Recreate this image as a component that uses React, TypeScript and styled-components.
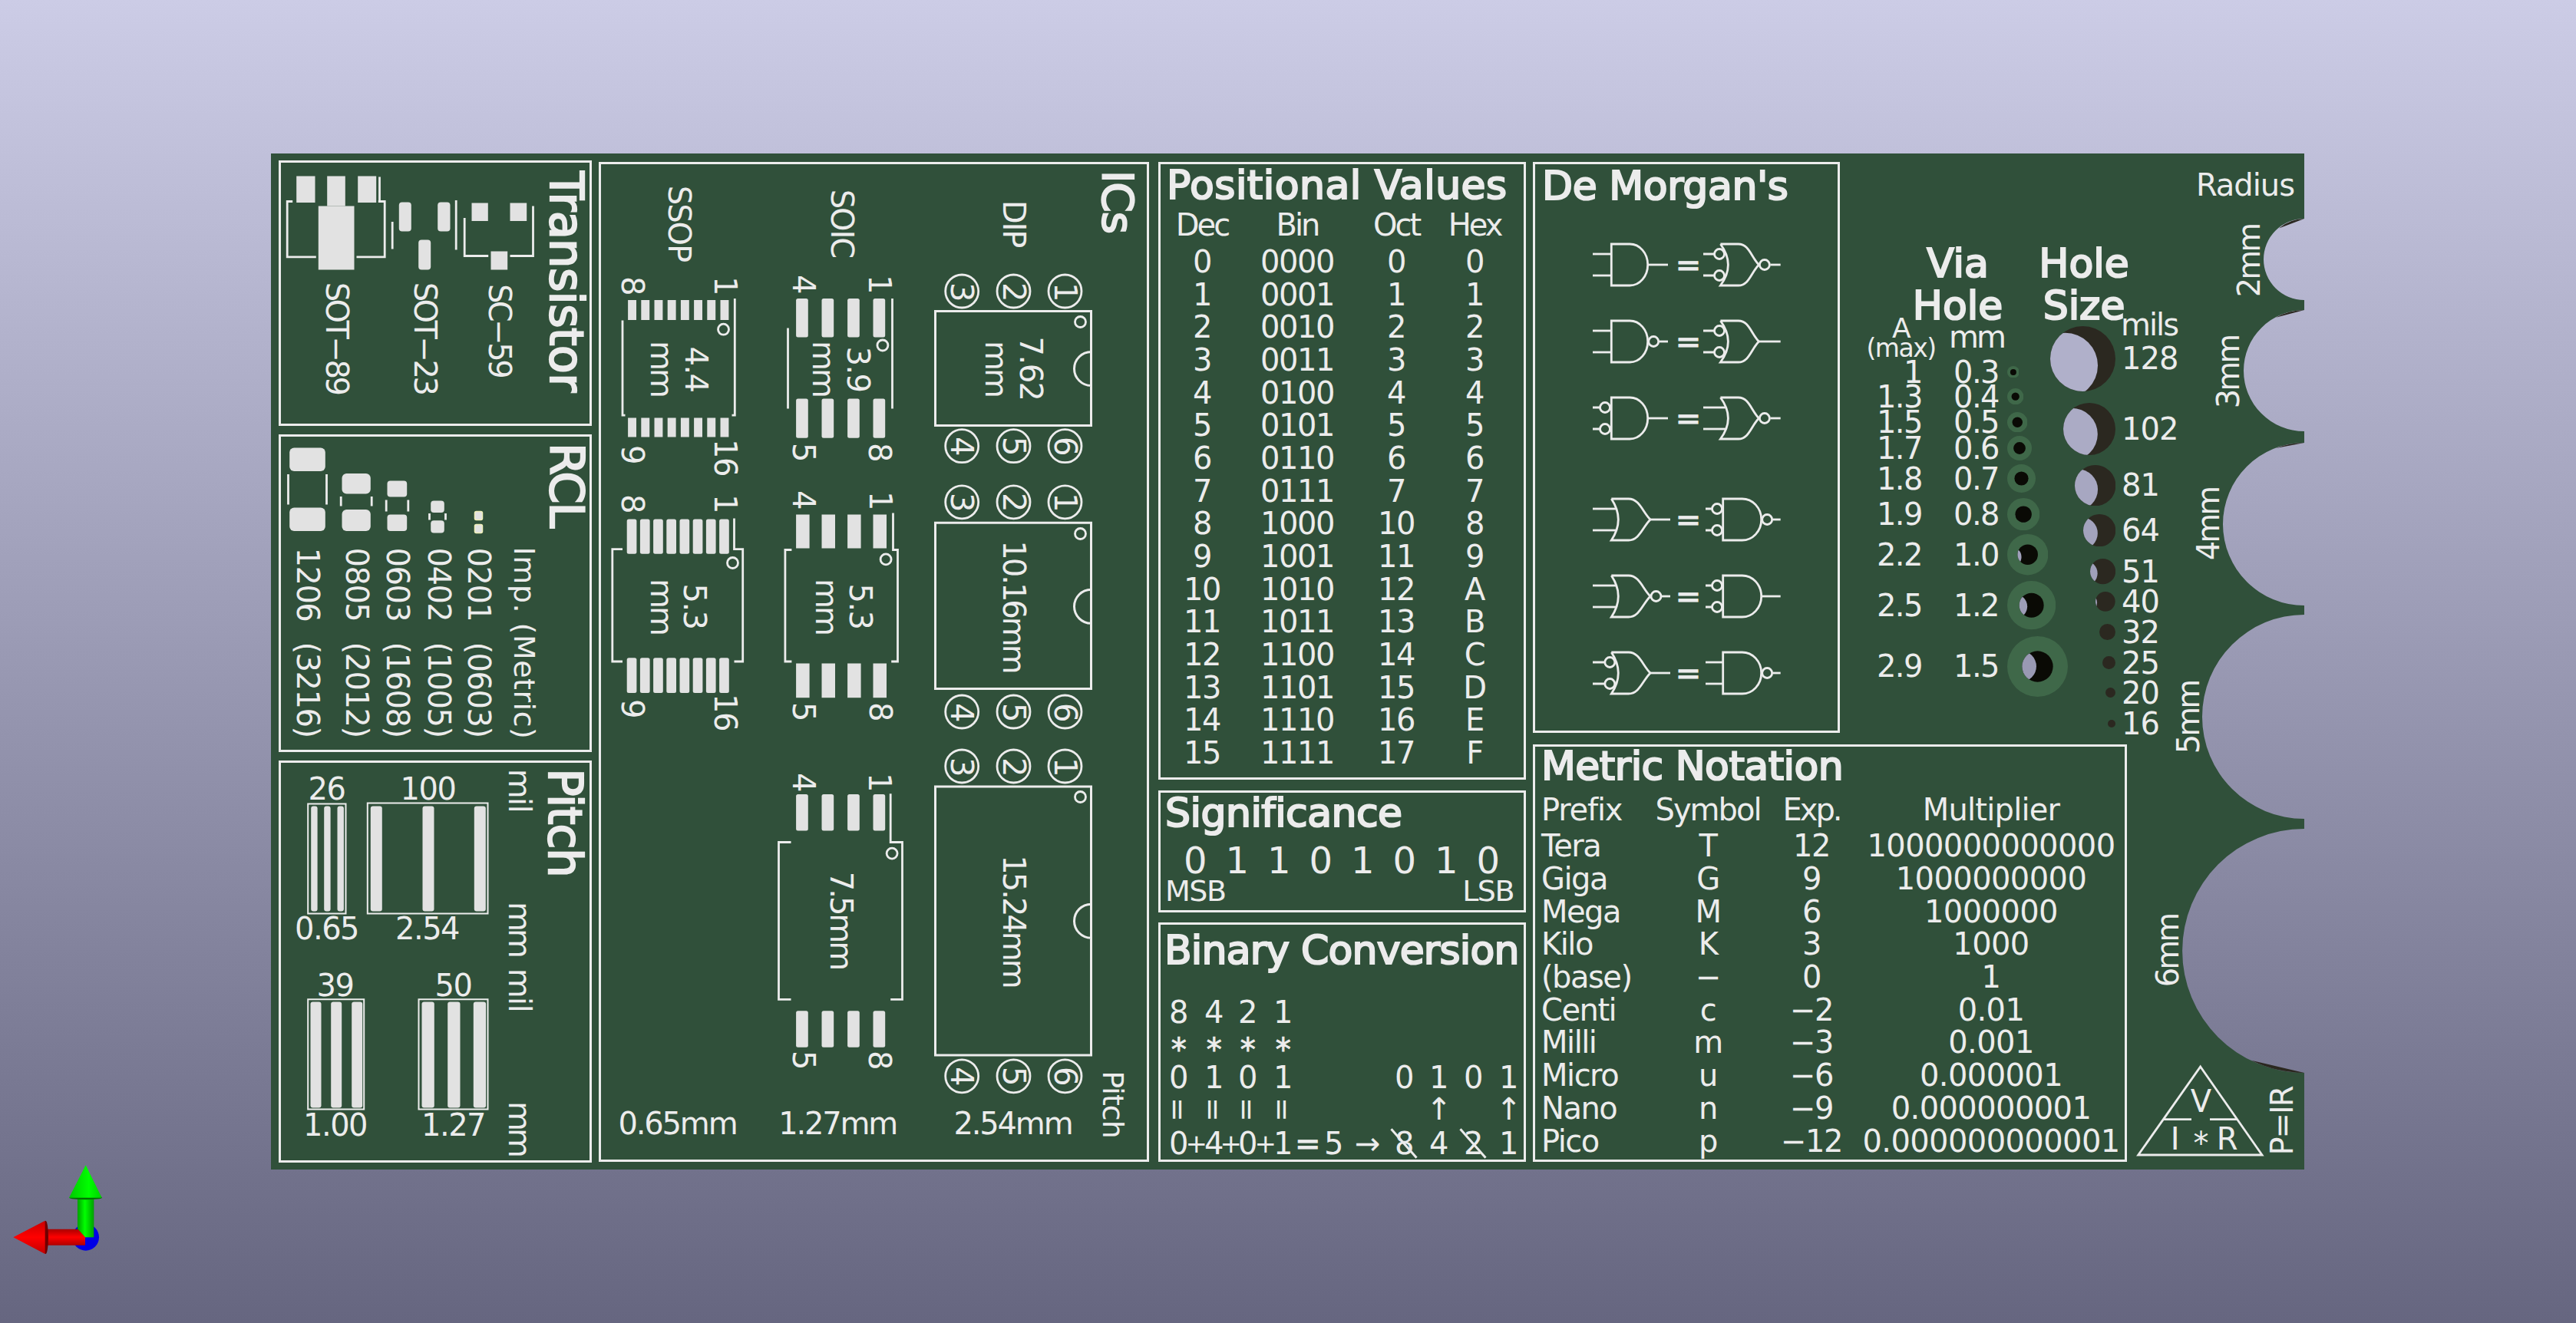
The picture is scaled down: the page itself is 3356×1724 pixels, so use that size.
import React from "react";
import styled, { createGlobalStyle } from "styled-components";

const SILK = "#ececec";
const PAD = "#e2e2e2";
const BOARD = "#30503a";
const FONT = `"DejaVu Sans", "Liberation Sans", sans-serif`;

const Global = createGlobalStyle`
  html, body { margin: 0; padding: 0; background: #666680; }
`;

const Page = styled.div`
  position: relative;
  box-sizing: border-box;
  width: 3356px;
  height: 1724px;
  overflow: hidden;
  padding: 200px 0 0 353px;
  background: linear-gradient(180deg, #ccccE6 0%, #666680 100%);
  font-family: ${FONT};
  color: ${SILK};
`;

const Board = styled.div`
  position: relative;
  box-sizing: border-box;
  display: flex;
  align-items: flex-start;
  width: 2649px;
  height: 1324px;
  padding: 9px 0 0 10px;
  background: ${BOARD};
  clip-path: path("M0 0 H2649 V85 A53 53 0 0 0 2649 191 V204 A79 79 0 0 0 2649 362 V377 A106 106 0 0 0 2649 589 V601 A133 133 0 0 0 2649 867 V880 A159 159 0 0 0 2649 1198 V1324 H0 Z");
`;

const LeftColumn = styled.div`
  display: flex;
  flex-direction: column;
  gap: 11px;
  flex: 0 0 409px;
`;

const MidColumn = styled.div`
  display: flex;
  flex-direction: column;
  flex: 0 0 479px;
  margin: 2px 0 0 12px;
`;

const RightColumn = styled.div`
  display: flex;
  flex-direction: column;
  gap: 15px;
  margin: 2px 0 0 9px;
`;

const UpperRow = styled.div`
  display: flex;
  align-items: flex-start;
  height: 744px;
`;

const Panel = styled.section<{ $w: number; $h: number; $mt?: number; $ml?: number }>`
  position: relative;
  box-sizing: border-box;
  flex: none;
  width: ${(p) => p.$w}px;
  height: ${(p) => p.$h}px;
  margin-top: ${(p) => p.$mt ?? 0}px;
  margin-left: ${(p) => p.$ml ?? 0}px;
  border: 3.5px solid ${SILK};
`;

const PanelTitle = styled.h2<{ $ls?: number; $l?: number; $mt?: number }>`
  margin: ${(p) => p.$mt ?? 0}px 0 0 ${(p) => p.$l ?? 9}px;
  font-size: 52px;
  font-weight: 400;
  line-height: 50px;
  height: 50px;
  white-space: pre;
  letter-spacing: ${(p) => p.$ls ?? 0}px;
  -webkit-text-stroke: 2.2px ${SILK};
`;

const Silk = styled.span<{
  $x: number;
  $y: number;
  $s?: number;
  $ls?: number;
  $ws?: number;
  $d?: "cw" | "ccw";
  $b?: boolean;
}>`
  position: absolute;
  left: ${(p) => p.$x}px;
  top: ${(p) => p.$y}px;
  font-size: ${(p) => p.$s ?? 40}px;
  letter-spacing: ${(p) => p.$ls ?? -1.5}px;
  word-spacing: ${(p) => p.$ws ?? 0}px;
  line-height: 1;
  white-space: pre;
  writing-mode: ${(p) => (p.$d ? "vertical-rl" : "horizontal-tb")};
  transform: translate(-50%, -50%) ${(p) => (p.$d === "ccw" ? "rotate(180deg)" : "")};
  ${(p) => (p.$b ? `-webkit-text-stroke: 2.2px ${SILK};` : "")}
`;

const ArtSvg = styled.svg<{ $l: number; $t: number }>`
  position: absolute;
  left: ${(p) => p.$l}px;
  top: ${(p) => p.$t}px;
  overflow: visible;
`;

const Pad = styled.rect<{ $rim?: boolean }>`
  fill: ${PAD};
  ${(p) => (p.$rim ? "stroke: #efefb8; stroke-width: 1.5px;" : "")}
`;

const Trace = styled.path<{ $sw?: number }>`
  fill: none;
  stroke: ${SILK};
  stroke-width: ${(p) => p.$sw ?? 2.8}px;
`;

const Ring = styled.circle<{ $sw?: number }>`
  fill: none;
  stroke: ${SILK};
  stroke-width: ${(p) => p.$sw ?? 2.8}px;
`;

const Art: React.FC<{ x: number; y: number; w: number; h: number; l?: number; t?: number; children: React.ReactNode }> = ({
  x, y, w, h, l = 0, t = 0, children,
}) => (
  <ArtSvg $l={l} $t={t} width={w} height={h} viewBox={`${x} ${y} ${w} ${h}`}>
    {children}
  </ArtSvg>
);

const at = (ox: number, oy: number) => (x: number, y: number) => ({ $x: x - ox, $y: y - oy });

/* ---------- Transistor ---------- */
const TransistorPanel = () => {
  const p = at(366.5, 212.5);
  return (
    <Panel $w={408} $h={346}>
      <Art x={366.5} y={212.5} w={401} h={339}>
        <Pad x={386.7} y={230} width={24.3} height={34.5} />
        <Pad x={426.7} y={230} width={23.6} height={39} />
        <Pad x={466.7} y={230} width={24} height={34.5} />
        <Pad x={415.3} y={269} width={46.7} height={83} />
        <Trace d="M381.7 263 H374.7 V335.4 H412.3 M465 335.4 H501.7 V263 H495 V231 M495 263 H493.3" />
        <Pad x={520.3} y={264} width={16} height={38} rx={4} />
        <Pad x={570.7} y={264} width={16.3} height={38} rx={4} />
        <Pad x={545.7} y={313} width={16} height={39} rx={4} />
        <Trace d="M511.7 289.5 V325 M594.7 261.4 V326" />
        <Pad x={615} y={265} width={21.3} height={23.5} />
        <Pad x={665} y={265} width={21.7} height={23.5} />
        <Pad x={640} y={328} width={21.7} height={24} />
        <Trace d="M605.7 284.4 V334 H636.7 M665 334 H695 V269" />
      </Art>
      <Silk {...p(738, 367)} $d="cw" $s={60} $ls={-0.4} $b>Transistor</Silk>
      <Silk {...p(439, 440)} $d="cw" $ls={-3.5}>SOT−89</Silk>
      <Silk {...p(554.5, 440)} $d="cw" $ls={-3.5}>SOT−23</Silk>
      <Silk {...p(651.5, 430)} $d="cw" $ls={-3.5}>SC−59</Silk>
    </Panel>
  );
};

/* ---------- RCL ---------- */
const rclSizes = [
  ["1206 (3216)", 401],
  ["0805 (2012)", 465.5],
  ["0603 (1608)", 518],
  ["0402 (1005)", 572],
  ["0201 (0603)", 624],
] as const;

const RclPanel = () => {
  const p = at(366.5, 569.5);
  return (
    <Panel $w={408} $h={414}>
      <Art x={366.5} y={569.5} w={401} h={407}>
        <Pad x={377.7} y={584} width={46.6} height={30.5} rx={6} />
        <Pad x={377.7} y={662} width={46.6} height={30.5} rx={6} />
        <Trace d="M376 618.6 V658 M426 618.6 V658" />
        <Pad x={446} y={617.5} width={37.3} height={26.5} rx={6} />
        <Pad x={446} y={664.5} width={37.3} height={28} rx={6} />
        <Trace d="M444.7 647.6 V660 M484.7 647.6 V660" />
        <Pad x={505} y={627} width={25.7} height={21} rx={4} />
        <Pad x={505} y={671} width={25.7} height={21.5} rx={4} />
        <Trace d="M503.7 652 V667 M532.3 652 V667" />
        <Pad x={561.7} y={653} width={17.6} height={15.6} rx={4} />
        <Pad x={561.7} y={678.8} width={17.6} height={16.2} rx={4} />
        <Trace d="M560 669.6 V678 M581 669.6 V678" />
        <Pad $rim x={619} y={667} width={10} height={11} rx={2} />
        <Pad $rim x={619} y={684} width={10} height={11} rx={2} />
      </Art>
      <Silk {...p(738, 632)} $d="cw" $s={60} $ls={-1.5} $b>RCL</Silk>
      <Silk {...p(683, 838)} $d="cw" $s={38} $ls={0.5}>Imp. (Metric)</Silk>
      {rclSizes.map(([t, x]) => (
        <Silk key={t} {...p(x, 837)} $d="cw" $ws={16}>{t}</Silk>
      ))}
    </Panel>
  );
};

/* ---------- Pitch ---------- */
const pitchLabels = [
  ["26", 426, 1028], ["100", 558, 1028], ["0.65", 426, 1210], ["2.54", 557, 1210],
  ["39", 437, 1284.5], ["50", 591, 1284.5], ["1.00", 437, 1466.5], ["1.27", 591, 1466.5],
] as const;

const PitchPanel = () => {
  const p = at(366.5, 994.5);
  const stripes = (xs: number[], w: number, y: number, h: number) =>
    xs.map((x) => <Pad key={x} x={x} y={y} width={w} height={h} rx={3} />);
  return (
    <Panel $w={408} $h={524}>
      <Art x={366.5} y={994.5} w={401} h={517}>
        <Trace $sw={2} d="M401.7 1048 H451 V1191 H401.7 Z" />
        {stripes([405.7, 422.7, 440], 8.4, 1051, 137)}
        <Trace $sw={2} d="M479.3 1047 H636 V1191 H479.3 Z" />
        {stripes([483.3, 551, 618.3], 15, 1051, 137)}
        <Trace $sw={2} d="M401.7 1302.7 H474.7 V1446 H401.7 Z" />
        {stripes([405, 431.7, 458.7], 14, 1306, 138)}
        <Trace $sw={2} d="M546 1302.7 H636 V1446 H546 Z" />
        {stripes([550, 583.7, 617.3], 16.3, 1306, 138)}
      </Art>
      <Silk {...p(736, 1072)} $d="cw" $s={60} $ls={-1} $b>Pitch</Silk>
      <Silk {...p(677, 1030)} $d="cw">mil</Silk>
      <Silk {...p(677, 1210)} $d="cw" $ls={-4}>mm</Silk>
      <Silk {...p(677, 1290)} $d="cw">mil</Silk>
      <Silk {...p(677, 1470)} $d="cw" $ls={-4}>mm</Silk>
      {pitchLabels.map(([t, x, y]) => (
        <Silk key={t} {...p(x, y)}>{t}</Silk>
      ))}
    </Panel>
  );
};

/* ---------- ICs ---------- */
const padRow = (x0: number, pitch: number, n: number, w: number, y: number, h: number, rx = 0) =>
  Array.from({ length: n }, (_, i) => (
    <Pad key={`${x0}-${y}-${i}`} x={x0 + i * pitch} y={y} width={w} height={h} rx={rx} />
  ));

const soicXs = [1037.6, 1071, 1104.6, 1138];
const soicPads = (w: number, y: number, h: number, rx: number) =>
  soicXs.map((x) => <Pad key={`${x}-${y}`} x={x} y={y} width={w} height={h} rx={rx} />);

const pinRows = [
  { y: 380, d: ["3", "2", "1"] },
  { y: 581.7, d: ["4", "5", "6"] },
  { y: 654.8, d: ["3", "2", "1"] },
  { y: 928, d: ["4", "5", "6"] },
  { y: 999, d: ["3", "2", "1"] },
  { y: 1402.8, d: ["4", "5", "6"] },
];
const pinXs = [1253.7, 1321, 1388];

const icLabels = [
  ["1", 945, 372], ["8", 824, 372.5], ["9", 824, 592], ["16", 945, 596],
  ["8", 824, 656], ["1", 945, 656], ["9", 824, 923], ["16", 945, 928],
  ["4", 1047, 370], ["1", 1146, 370], ["5", 1047, 589], ["8", 1146, 589],
  ["4", 1047, 651.6], ["1", 1147, 652], ["5", 1047, 927], ["8", 1147, 927],
  ["4", 1047, 1019.5], ["1", 1146, 1019.5], ["5", 1047, 1381.6], ["8", 1146, 1381.6],
  ["4.4", 907, 481], ["mm", 862, 480], ["5.3", 905.6, 790.3], ["mm", 862, 790],
  ["3.9", 1118, 481], ["mm", 1073, 480], ["5.3", 1121.4, 790], ["mm", 1077, 790],
  ["7.5mm", 1096, 1199.5], ["7.62", 1343.5, 480], ["mm", 1298, 480],
  ["10.16mm", 1321, 790], ["15.24mm", 1321, 1200],
] as const;

const IcsPanel = () => {
  const p = at(783.5, 214.5);
  return (
    <Panel $w={717} $h={1303} $ml={8} $mt={2}>
      <Art x={783.5} y={214.5} w={710} h={1296}>
        {pinRows.map((r) => pinXs.map((x) => <Ring key={`${x}-${r.y}`} cx={x} cy={r.y} r={21.5} />))}
        <Trace $sw={3} d="M1219 406 H1422 V555 H1219 Z M1422 459 A22 22 0 0 0 1422 503" />
        <Ring cx={1408} cy={420} r={7} />
        <Trace $sw={3} d="M1219 681.7 H1422 V898 H1219 Z M1422 768.8 A22 22 0 0 0 1422 812.8" />
        <Ring cx={1408} cy={696} r={7} />
        <Trace $sw={3} d="M1219 1025.6 H1422 V1375.5 H1219 Z M1422 1178.7 A22 22 0 0 0 1422 1222.7" />
        <Ring cx={1408} cy={1039} r={7} />

        {padRow(818.6, 17.2, 8, 10.9, 391.5, 26)}
        {padRow(818.6, 17.2, 8, 10.9, 545, 25)}
        <Trace d="M957.8 389.6 V541.6 H954 M811.5 418 V541.6 H815" />
        <Ring cx={943} cy={429.7} r={7} />

        {padRow(817.2, 17.2, 8, 12.7, 677, 45.3, 2.5)}
        {padRow(817.2, 17.2, 8, 12.7, 857.8, 45.7, 2.5)}
        <Trace d="M957 676 V716.2 H968.2 V862.5 H957 M811.5 716.2 H798.3 V862.5 H811.5" />
        <Ring cx={955} cy={734} r={7} />

        {soicPads(15.7, 389.6, 50.4, 2.5)}
        {soicPads(15.7, 520, 51.3, 2.5)}
        <Trace d="M1163 389.6 V533 M1027 428 V533" />
        <Ring cx={1150.4} cy={450.5} r={7} />

        {soicPads(17.5, 671, 44, 0)}
        {soicPads(17.5, 865, 44.7, 0)}
        <Trace d="M1164 669 V717 H1170 V862.5 H1161.7 M1031.9 717 H1023.4 V862.5 H1031.9" />
        <Ring cx={1154.6} cy={729.4} r={7} />

        {soicPads(15.7, 1035.5, 47.5, 2.5)}
        {soicPads(15.7, 1317.8, 47.4, 2.5)}
        <Trace d="M1160.7 1034.7 V1098 H1176 V1302.8 H1160.7 M1031 1098 H1015 V1302.8 H1031" />
        <Ring cx={1162.6} cy={1112.6} r={7} />
      </Art>
      <Silk {...p(1456, 263)} $d="cw" $s={56} $ls={-1} $b>ICs</Silk>
      <Silk {...p(885.5, 291)} $d="cw" $ls={-2}>SSOP</Silk>
      <Silk {...p(1097, 291)} $d="cw" $ls={-2}>SOIC</Silk>
      <Silk {...p(1321, 291.5)} $d="cw" $ls={-2}>DIP</Silk>
      {pinRows.map((r) =>
        r.d.map((d, i) => (
          <Silk key={`${r.y}-${i}`} {...p(pinXs[i], r.y)} $d="cw">{d}</Silk>
        ))
      )}
      {icLabels.map(([t, x, y], i) => (
        <Silk key={i} {...p(x, y)} $d="cw" $ls={t.includes("mm") ? -3 : -1.5}>{t}</Silk>
      ))}
      <Silk {...p(883, 1464)} $ls={-2.2}>0.65mm</Silk>
      <Silk {...p(1091.6, 1464)} $ls={-2.2}>1.27mm</Silk>
      <Silk {...p(1320, 1464)} $ls={-2.2}>2.54mm</Silk>
      <Silk {...p(1450, 1439.5)} $d="cw" $ls={-1} $s={38}>Pitch</Silk>
    </Panel>
  );
};

/* ---------- Positional Values ---------- */
const PosGrid = styled.div`
  display: grid;
  grid-template-columns: 108px 140px 118px 86px;
  grid-template-rows: 54.3px repeat(16, 42.67px);
`;

const Cell = styled.span<{ $ls?: number; $s?: number; $pt?: number; $bold?: boolean }>`
  position: relative;
  display: flex;
  align-items: center;
  justify-content: center;
  box-sizing: border-box;
  padding-top: ${(p) => p.$pt ?? 0}px;
  font-size: ${(p) => p.$s ?? 40}px;
  letter-spacing: ${(p) => p.$ls ?? -1.5}px;
  line-height: 1;
  white-space: pre;
  ${(p) => (p.$bold ? `-webkit-text-stroke: 0.9px ${SILK};` : "")}
`;

const hexRows = Array.from({ length: 16 }, (_, i) => [
  String(i),
  i.toString(2).padStart(4, "0"),
  i.toString(8),
  i.toString(16).toUpperCase(),
]);

const PositionalPanel = () => (
  <Panel $w={479} $h={805}>
    <PanelTitle $ls={0.5} $l={8} $mt={1.5}>Positional Values</PanelTitle>
    <PosGrid>
      {["Dec", "Bin", "Oct", "Hex"].map((h) => (
        <Cell key={h} $ls={-3}>{h}</Cell>
      ))}
      {hexRows.flat().map((v, i) => (
        <Cell key={i}>{v}</Cell>
      ))}
    </PosGrid>
  </Panel>
);

/* ---------- Significance ---------- */
const BitsRow = styled.div`
  display: flex;
  margin: 16.5px 0 0 18px;
`;

const Bit = styled.span`
  flex: 0 0 54.5px;
  font-size: 48px;
  line-height: 40px;
  text-align: center;
`;

const EndsRow = styled.div`
  display: flex;
  justify-content: space-between;
  margin-top: 5.5px;
  padding: 0 13px 0 6px;
  font-size: 38px;
  line-height: 30px;
  letter-spacing: -1.5px;
`;

const SignificancePanel = () => (
  <Panel $w={479} $h={159} $mt={14}>
    <PanelTitle $ls={-0.5} $l={6} $mt={1}>Significance</PanelTitle>
    <BitsRow>
      {"01101010".split("").map((b, i) => (
        <Bit key={i}>{b}</Bit>
      ))}
    </BitsRow>
    <EndsRow>
      <span>MSB</span>
      <span>LSB</span>
    </EndsRow>
  </Panel>
);

/* ---------- Binary Conversion ---------- */
const BinGrid = styled.div`
  display: grid;
  margin: 36px 0 0 12px;
  grid-template-columns: 22px 24px 22px 22px 22px 24px 22px 42px 26px 62px 34px 56px 34px 58px;
  grid-template-rows: 40px 42px 46px 36px 53px;
`;

const Slot = styled(Cell)<{ $c: number; $r: number }>`
  grid-column: ${(p) => p.$c};
  grid-row: ${(p) => p.$r};
`;

const Crossed = styled(Slot)`
  &::after {
    content: "";
    position: absolute;
    left: 50%;
    top: 50%;
    width: 50px;
    height: 3px;
    background: ${SILK};
    transform: translate(-50%, -50%) rotate(48.7deg);
  }
`;

const Upright = styled(Slot)`
  writing-mode: vertical-rl;
`;

const leftCols = [1, 3, 5, 7];
const rightCols = [11, 12, 13, 14];
const bits = ["0", "1", "0", "1"];

const BinaryPanel = () => (
  <Panel $w={479} $h={312} $mt={13}>
    <PanelTitle $ls={-0.8} $l={5} $mt={8}>Binary Conversion</PanelTitle>
    <BinGrid>
      {["8", "4", "2", "1"].map((d, i) => (
        <Slot key={i} $c={leftCols[i]} $r={1}>{d}</Slot>
      ))}
      {leftCols.map((c) => (
        <Slot key={c} $c={c} $r={2} $pt={16} $bold>*</Slot>
      ))}
      {bits.map((d, i) => (
        <Slot key={i} $c={leftCols[i]} $r={3}>{d}</Slot>
      ))}
      {bits.map((d, i) => (
        <Slot key={i} $c={rightCols[i]} $r={3}>{d}</Slot>
      ))}
      {leftCols.map((c) => (
        <Upright key={c} $c={c} $r={4} $s={38}>=</Upright>
      ))}
      <Slot $c={12} $r={4}>↑</Slot>
      <Slot $c={14} $r={4}>↑</Slot>
      <Slot $c={1} $r={5}>0</Slot>
      <Slot $c={2} $r={5} $s={34}>+</Slot>
      <Slot $c={3} $r={5}>4</Slot>
      <Slot $c={4} $r={5} $s={34}>+</Slot>
      <Slot $c={5} $r={5}>0</Slot>
      <Slot $c={6} $r={5} $s={34}>+</Slot>
      <Slot $c={7} $r={5}>1</Slot>
      <Slot $c={8} $r={5} $bold>=</Slot>
      <Slot $c={9} $r={5}>5</Slot>
      <Slot $c={10} $r={5}>→</Slot>
      <Crossed $c={11} $r={5}>8</Crossed>
      <Slot $c={12} $r={5}>4</Slot>
      <Crossed $c={13} $r={5}>2</Crossed>
      <Slot $c={14} $r={5}>1</Slot>
    </BinGrid>
  </Panel>
);

/* ---------- De Morgan ---------- */
const GateRows = styled.div`
  display: flex;
  flex-direction: column;
  gap: 40px;
  margin: 48.5px 0 0 75px;
`;

const GateRow = styled.div<{ $gap?: boolean }>`
  display: flex;
  align-items: center;
  height: 60px;
  margin-top: ${(p) => (p.$gap ? 32 : 0)}px;
`;

const Equal = styled.span`
  flex: 0 0 39px;
  font-size: 40px;
  line-height: 1;
  text-align: center;
  -webkit-text-stroke: 0.9px ${SILK};
`;

const GateSvg = styled.svg`
  flex: none;
  overflow: visible;
`;

const GateLine = styled.path`
  fill: none;
  stroke: ${SILK};
  stroke-width: 2.8px;
`;

const Bubble = styled.circle`
  fill: ${BOARD};
  stroke: ${SILK};
  stroke-width: 2.8px;
`;

const geom = {
  and: {
    l: { c: 24.3, m: 24.3, f: 48.3, t: 71.7, s: 0, b: 16, e: 98 },
    r: { c: 25.7, m: 25.7, f: 50.7, t: 75.7, s: 3, b: 18, e: 100.7 },
  },
  or: {
    l: { c: 24.3, m: 33.3, f: 46.7, t: 75, s: 0, b: 22.3, e: 101 },
    r: { c: 22.4, m: 32.4, f: 45.7, t: 72.4, s: 0, b: 21, e: 100.7 },
  },
};

const Gate: React.FC<{ kind: "and" | "or"; side: "l" | "r"; inv?: boolean; out?: boolean }> = ({ kind, side, inv, out }) => {
  const g = geom[kind][side];
  const back = kind === "and" ? "" : ` Q${g.c + 2 * (g.m - g.c)} 0 ${g.c} -27`;
  const front =
    kind === "and"
      ? `A${g.t - g.f} 27 0 0 1 ${g.t} 0 A${g.t - g.f} 27 0 0 1 ${g.f} 27`
      : `C${g.f + 14} -27 ${g.t - 10} -10 ${g.t} 0 C${g.t - 10} 10 ${g.f + 14} 27 ${g.f} 27`;
  const body = `M${g.c} -27 H${g.f} ${front} H${g.c}${kind === "and" ? " Z" : back}`;
  const inEnd = kind === "and" ? g.c : g.c + 0.73 * (g.m - g.c);
  const outStart = out ? g.t + 15 : g.t;
  return (
    <GateSvg width={side === "l" ? 105 : 101} height={60} viewBox={`0 -30 ${side === "l" ? 105 : 101} 60`}>
      <GateLine d={body} />
      {[-14, 14].map((y) =>
        inv ? (
          <g key={y}>
            <GateLine d={`M${g.s} ${y} H${g.b - 7} M${g.b + 7} ${y} H${inEnd}`} />
            <Bubble cx={g.b} cy={y} r={6.5} />
          </g>
        ) : (
          <GateLine key={y} d={`M${g.s} ${y} H${inEnd}`} />
        )
      )}
      {out && <Bubble cx={g.t + 7.5} cy={0} r={6.5} />}
      <GateLine d={`M${outStart} 0 H${g.e}`} />
    </GateSvg>
  );
};

const DeMorganPanel = () => (
  <Panel $w={400} $h={744}>
    <PanelTitle $ls={-0.4} $l={9} $mt={2.5}>De Morgan's</PanelTitle>
    <GateRows>
      <GateRow><Gate kind="and" side="l" /><Equal>=</Equal><Gate kind="or" side="r" inv out /></GateRow>
      <GateRow><Gate kind="and" side="l" out /><Equal>=</Equal><Gate kind="or" side="r" inv /></GateRow>
      <GateRow><Gate kind="and" side="l" inv /><Equal>=</Equal><Gate kind="or" side="r" out /></GateRow>
      <GateRow $gap><Gate kind="or" side="l" /><Equal>=</Equal><Gate kind="and" side="r" inv out /></GateRow>
      <GateRow><Gate kind="or" side="l" out /><Equal>=</Equal><Gate kind="and" side="r" inv /></GateRow>
      <GateRow><Gate kind="or" side="l" inv /><Equal>=</Equal><Gate kind="and" side="r" out /></GateRow>
    </GateRows>
  </Panel>
);

/* ---------- Via + Hole charts ---------- */
const bgAt = (y: number) => {
  const t = y / 1724;
  const c = (a: number, b: number) => Math.round(a + (b - a) * t);
  return `rgb(${c(204, 102)},${c(204, 102)},${c(230, 128)})`;
};

const DrillSvg = styled.svg`
  flex: none;
  display: block;
`;

const Drill: React.FC<{ id: string; cx: number; cy: number; outer?: number; d: number; wall: string }> = ({ id, cx, cy, outer, d, wall }) => {
  const size = outer ?? d;
  const dx = (1678 - cx) * 0.0222;
  const dy = (862 - cy) * 0.0222;
  return (
    <DrillSvg width={size} height={size} viewBox={`${-size / 2} ${-size / 2} ${size} ${size}`}>
      <defs>
        <clipPath id={id}>
          <circle r={d / 2} />
        </clipPath>
      </defs>
      {outer && <circle r={outer / 2} fill="#3f6849" />}
      <circle r={d / 2} fill={wall} />
      <circle cx={dx} cy={dy} r={d / 2} fill={bgAt(cy)} clipPath={`url(#${id})`} />
    </DrillSvg>
  );
};

const ChartBlock = styled.div<{ $w: number; $ml?: number }>`
  position: relative;
  flex: none;
  width: ${(p) => p.$w}px;
  margin: 104.5px 0 0 ${(p) => p.$ml ?? 0}px;
`;

const ChartTitle = styled.h3`
  margin: 0 -40px;
  font-size: 52px;
  font-weight: 400;
  line-height: 55px;
  text-align: center;
  white-space: pre;
  -webkit-text-stroke: 2.2px ${SILK};
`;

const ViaHead = styled.div`
  position: relative;
  height: 43px;
`;

const ViaRow = styled.div<{ $h: number }>`
  display: flex;
  align-items: center;
  height: ${(p) => p.$h}px;
  font-size: 40px;
  letter-spacing: -1.5px;
`;

const ViaAmp = styled.span`
  flex: 0 0 73px;
  text-align: right;
`;

const ViaSize = styled.span`
  flex: 0 0 69px;
  margin: 0 5.7px 0 36px;
  text-align: center;
`;

const viaData = [
  ["1", "0.3", 15.8, 8, 32, 484.5],
  ["1.3", "0.4", 21.4, 10.3, 32.2, 516.6],
  ["1.5", "0.5", 26.5, 13.4, 34.6, 550],
  ["1.7", "0.6", 32, 15.8, 32.6, 583.6],
  ["1.8", "0.7", 37, 18.2, 47.8, 623.8],
  ["1.9", "0.8", 42.3, 21.4, 44, 669.7],
  ["2.2", "1.0", 53.4, 26.5, 62.4, 723],
  ["2.5", "1.2", 63.3, 32, 69.8, 789],
  ["2.9", "1.5", 79, 40.3, 89, 868.4],
] as const;

const ViaChart = () => {
  const p = at(2431, 425.5);
  return (
    <ChartBlock $w={239} $ml={34}>
      <ChartTitle>{"Via\nHole"}</ChartTitle>
      <ViaHead>
        <Silk {...p(2476.6, 428)} $s={36}>A</Silk>
        <Silk {...p(2476.5, 453)} $s={33} $ls={-1.5}>(max)</Silk>
        <Silk {...p(2575, 439)} $ls={-3}>mm</Silk>
      </ViaHead>
      {viaData.map(([a, mm, outer, d, h, y]) => (
        <ViaRow key={mm} $h={h}>
          <ViaAmp>{a}</ViaAmp>
          <ViaSize>{mm}</ViaSize>
          <Drill id={`via${mm}`} cx={2614.7 + outer / 2} cy={y} outer={outer} d={d} wall="#0a0a05" />
        </ViaRow>
      ))}
    </ChartBlock>
  );
};

const HoleRow = styled.div<{ $h: number }>`
  display: flex;
  align-items: center;
  height: ${(p) => p.$h}px;
  font-size: 40px;
  letter-spacing: -1px;
`;

const HoleSlot = styled.span`
  display: flex;
  justify-content: flex-end;
  align-items: center;
  flex: 0 0 86px;
  margin-right: 8px;
`;

const HoleList = styled.div`
  margin-top: -1px;
`;

const holeData = [
  ["128", 85, 85, 467],
  ["102", 68, 98, 558.5],
  ["81", 53.4, 49.8, 632.4],
  ["64", 42.3, 67.4, 691],
  ["51", 33.2, 40.6, 745],
  ["40", 25.7, 37.4, 784],
  ["32", 21, 42.6, 824],
  ["25", 17, 36.6, 863.6],
  ["20", 13, 42.2, 903],
  ["16", 10, 38.6, 943.4],
] as const;

const HoleChart = () => {
  const p = at(2670, 315.5);
  return (
    <ChartBlock $w={90}>
      <ChartTitle>{"Hole\nSize"}</ChartTitle>
      <Silk {...p(2800, 423)} $ls={-2}>mils</Silk>
      <HoleList>
        {holeData.map(([t, d, h, y]) => (
          <HoleRow key={t} $h={h}>
            <HoleSlot>
              <Drill id={`hole${t}`} cx={2756 - d / 2} cy={y} d={d} wall="#2b2820" />
            </HoleSlot>
            <span>{t}</span>
          </HoleRow>
        ))}
      </HoleList>
    </ChartBlock>
  );
};

/* ---------- Metric Notation ---------- */
const MetricGrid = styled.div`
  display: grid;
  margin-top: 6px;
  grid-template-columns: 160px 130px 140px 328px;
  grid-template-rows: 52px repeat(10, 42.7px);
`;

const Prefix = styled(Cell)`
  justify-content: flex-start;
  padding-left: 8px;
`;

const metricRows = [
  ["Tera", "T", "12", "1000000000000"],
  ["Giga", "G", "9", "1000000000"],
  ["Mega", "M", "6", "1000000"],
  ["Kilo", "K", "3", "1000"],
  ["(base)", "−", "0", "1"],
  ["Centi", "c", "−2", "0.01"],
  ["Milli", "m", "−3", "0.001"],
  ["Micro", "u", "−6", "0.000001"],
  ["Nano", "n", "−9", "0.000000001"],
  ["Pico", "p", "−12", "0.000000000001"],
];

const MetricPanel = () => (
  <Panel $w={774} $h={544}>
    <PanelTitle $ls={-0.5} $l={8}>Metric Notation</PanelTitle>
    <MetricGrid>
      <Prefix $ls={-1.2}>Prefix</Prefix>
      <Cell $ls={-2}>Symbol</Cell>
      <Cell $ls={-3}>Exp.</Cell>
      <Cell $ls={-0.8}>Multiplier</Cell>
      {metricRows.map(([a, b, c, d]) => (
        <React.Fragment key={a}>
          <Prefix>{a}</Prefix>
          <Cell>{b}</Cell>
          <Cell>{c}</Cell>
          <Cell $ls={-0.6}>{d}</Cell>
        </React.Fragment>
      ))}
    </MetricGrid>
  </Panel>
);

/* ---------- Loose silk on the board ---------- */
const BoardSilk = () => {
  const p = at(353, 200);
  return (
    <>
      <Silk {...p(2925, 241)} $ls={-1}>Radius</Silk>
      <Silk {...p(2930, 340)} $d="ccw" $ls={-3}>2mm</Silk>
      <Silk {...p(2903, 485)} $d="ccw" $ls={-3}>3mm</Silk>
      <Silk {...p(2877, 683)} $d="ccw" $ls={-3}>4mm</Silk>
      <Silk {...p(2850.5, 935)} $d="ccw" $ls={-3}>5mm</Silk>
      <Silk {...p(2824, 1239)} $d="ccw" $ls={-3}>6mm</Silk>
      <Silk {...p(2973, 1461)} $d="ccw" $ls={-2}>P=IR</Silk>
      <Art x={2780} y={1385} w={175} h={125} l={2427} t={1185}>
        <Trace d="M2866.7 1390 L2947 1505 H2785.7 Z M2819 1458.7 H2855 M2879 1458.7 H2915" />
      </Art>
      <Silk {...p(2866.7, 1434.6)}>V</Silk>
      <Silk {...p(2833, 1484)}>I</Silk>
      <Silk {...p(2866.7, 1490)}>*</Silk>
      <Silk {...p(2901, 1484)}>R</Silk>
    </>
  );
};

const EdgeSvg = styled.svg`
  position: absolute;
  left: 2900px;
  top: 270px;
`;

const BoardEdge = () => (
  <EdgeSvg width={110} height={1140} viewBox="2900 270 110 1140">
    <g fill="#2b2820">
      <path d="M3002 285 A53 53 0 0 0 2969 297.4 Z" />
      <path d="M3002 404 A79 79 0 0 0 2965 413.7 Z" />
      <path d="M3002 577 A106 106 0 0 0 2965 584 Z" />
      <path d="M3002 1398 A159 159 0 0 1 2933 1381.8 Z" />
    </g>
  </EdgeSvg>
);

/* ---------- Axis triad ---------- */
const TriadSvg = styled.svg`
  position: absolute;
  left: 0;
  top: 1500px;
`;

const Triad = () => (
  <TriadSvg width={180} height={150} viewBox="0 0 540 450">
    <defs>
      <linearGradient id="gs" x1="0" x2="1" y1="0" y2="0">
        <stop offset="0" stopColor="#00a000" />
        <stop offset="0.45" stopColor="#00ff00" />
        <stop offset="1" stopColor="#00a000" />
      </linearGradient>
      <linearGradient id="gc" x1="0" x2="1" y1="0" y2="0">
        <stop offset="0" stopColor="#00c800" />
        <stop offset="0.6" stopColor="#00ff00" />
        <stop offset="1" stopColor="#00d000" />
      </linearGradient>
      <linearGradient id="rs" x1="0" x2="0" y1="0" y2="1">
        <stop offset="0" stopColor="#a80000" />
        <stop offset="0.5" stopColor="#ff0000" />
        <stop offset="1" stopColor="#b00000" />
      </linearGradient>
      <linearGradient id="rc" x1="0" x2="0" y1="0" y2="1">
        <stop offset="0" stopColor="#c80000" />
        <stop offset="0.5" stopColor="#ff0000" />
        <stop offset="1" stopColor="#c00000" />
      </linearGradient>
    </defs>
    <circle cx={335} cy={337} r={52} fill="#0000e6" />
    <rect x={303} y={176} width={64} height={161} fill="url(#gs)" />
    <ellipse cx={335} cy={182} rx={64} ry={8} fill="#007000" />
    <polygon points="335,55 270,182 398,182" fill="url(#gc)" />
    <polygon points="175,305 305,305 333,337 333,368 175,368" fill="url(#rs)" />
    <ellipse cx={178} cy={337} rx={11} ry={65} fill="#700000" />
    <polygon points="52,337 176,272 176,402" fill="url(#rc)" />
  </TriadSvg>
);

export default function App() {
  return (
    <>
      <Global />
      <Page>
        <Board>
          <LeftColumn>
            <TransistorPanel />
            <RclPanel />
            <PitchPanel />
          </LeftColumn>
          <IcsPanel />
          <MidColumn>
            <PositionalPanel />
            <SignificancePanel />
            <BinaryPanel />
          </MidColumn>
          <RightColumn>
            <UpperRow>
              <DeMorganPanel />
              <ViaChart />
              <HoleChart />
            </UpperRow>
            <MetricPanel />
          </RightColumn>
          <BoardSilk />
        </Board>
        <BoardEdge />
        <Triad />
      </Page>
    </>
  );
}
